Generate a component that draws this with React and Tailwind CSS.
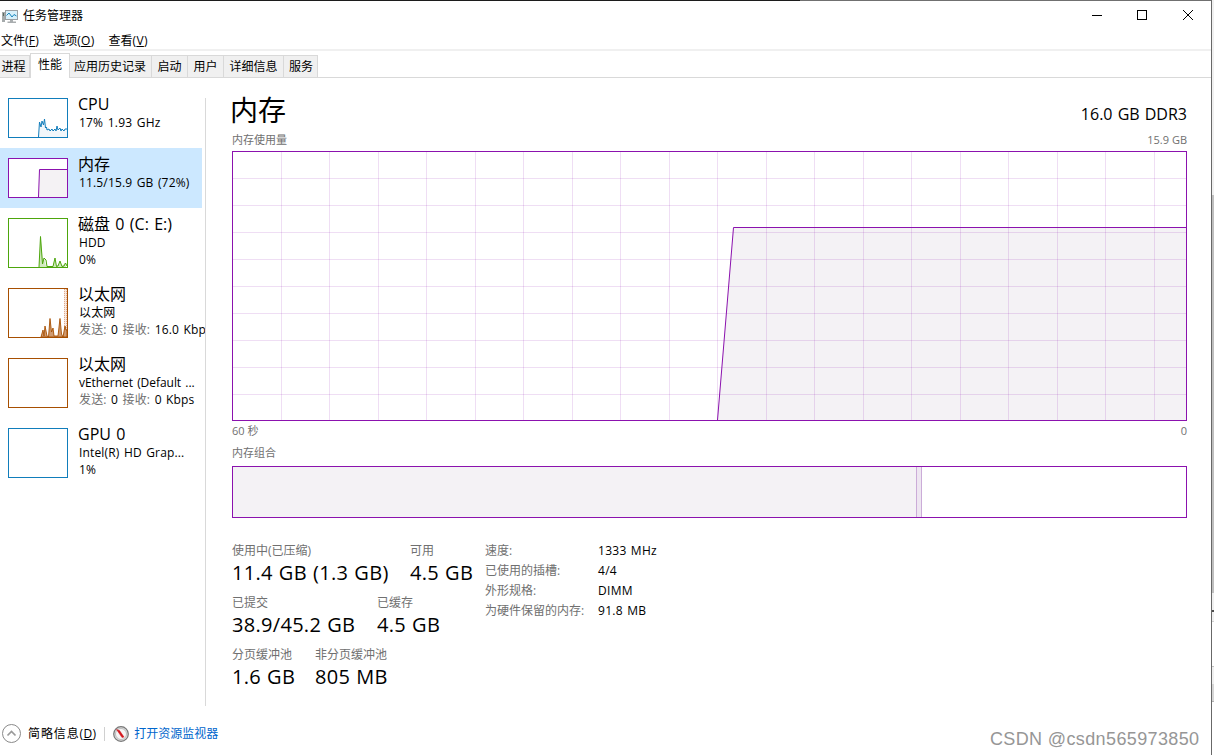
const tabs = [
    { label: '进程', box: 'w-[30px] pr-[2px]' },
    { label: '性能', box: 'w-[40px]', active: true },
    { label: '应用历史记录', box: 'w-[82px] pr-px' },
    { label: '启动', box: 'w-[36px]' },
    { label: '用户', box: 'w-[36px]' },
    { label: '详细信息', box: 'w-[60px]' },
    { label: '服务', box: 'w-[34px] pl-px' },
];

const columns = Array.from({ length: 19 }, (_, i) => Math.floor(0.5 + 48.5 * (i + 1)) + 0.5);
const rows = Array.from({ length: 9 }, (_, i) => 27 * (i + 1) + 0.5);

const Thumb = ({ height, color, children }) => (
    <svg width="60" height={height} className="block shrink-0" fill="none">
        <rect x="0.5" y="0.5" width="59" height={height - 1} fill="#fff" stroke={color} />
        {children}
    </svg>
);

const CpuThumb = () => (
    <Thumb height={40} color="#117dbb">
        <path d="M31 39L32 25L34 29L35 23L36 26L37 29L38 21L39 31L40 29L41 32L43 31L45 33L47 31L49 32L51 33L53 32L55 33L59 32V39Z" fill="#f1f6fa" />
        <path d="M30.5 39L31.5 24L33 29L34 23L35.5 27L36.5 21L37.5 30L38.5 29L39 32L41 31L42 33L44 31L45 33L47 31L48 33L49 28L50 32L52 30L53 33L54 31L56 33L57 31L60 31" stroke="#117dbb" />
    </Thumb>
);

const MemoryThumb = () => (
    <Thumb height={40} color="#8b12ae">
        <path d="M31 39V11.5H59V39Z" fill="#f4f2f4" />
        <path d="M30.5 39L31.5 11.5H59" stroke="#8b12ae" />
    </Thumb>
);

const DiskThumb = () => (
    <Thumb height={50} color="#4da60c">
        <path d="M31 49L32.5 18L35 44L36 40L38 48L42 48L45 48L47 40L48.5 48L51 46L52 43L54 48L57 45L58 49" fill="#d2e9c0" />
        <path d="M31 49L32.5 18.5L34.5 46L36 40L38 42L39 48.5H45L47 40L48.5 48.5L50 48L52 43L54 48.5L56 48L57.5 45L59 48" stroke="#4da60c" />
    </Thumb>
);

const NetworkThumb = () => (
    <Thumb height={50} color="#a74f01">
        <rect x="56" y="1" width="3" height="48" fill="#f7e9df" />
        <path d="M56.5 1V49" stroke="#e0a98c" strokeDasharray="1 1" />
        <path d="M58.5 1V49" stroke="#e0a98c" strokeDasharray="1 1" />
        <path d="M33 49L35 42L36 48L37 38L39 48L40.5 49L42 30.5L43.5 44L45 40L46 48L50 48L52 30.5L53.5 46L55 49L57 38L58 42L59 42V49Z" fill="#cf9a70" stroke="#a74f01" strokeWidth="0.9" />
    </Thumb>
);

const Traffic = ({ rate }) => (
    <>
        <span className="text-[#707070]">发送:</span> 0 <span className="text-[#707070]">接收:</span> {rate}
    </>
);

const devices = [
    { name: 'CPU', lines: [<span className="tracking-[0.2px]">17% 1.93 GHz</span>], thumb: <CpuThumb />, height: 'h-[60px]' },
    { name: '内存', lines: ['11.5/15.9 GB (72%)'], thumb: <MemoryThumb />, height: 'h-[60px]', selected: true },
    { name: '磁盘 0 (C: E:)', lines: ['HDD', '0%'], thumb: <DiskThumb />, height: 'h-[70px]' },
    { name: '以太网', lines: ['以太网', <Traffic rate="16.0 Kbps" />], thumb: <NetworkThumb />, height: 'h-[70px]' },
    {
        name: '以太网',
        lines: [<span className="tracking-[-0.05px]">vEthernet (Default ...</span>, <Traffic rate="0 Kbps" />],
        thumb: <Thumb height={50} color="#a74f01" />,
        height: 'h-[70px]',
    },
    { name: 'GPU 0', lines: ['Intel(R) HD Grap...', '1%'], thumb: <Thumb height={50} color="#117dbb" />, height: 'h-[70px]' },
];

const stats = [
    [
        { label: '使用中(已压缩)', value: '11.4 GB (1.3 GB)', box: 'w-[178px]' },
        { label: '可用', value: '4.5 GB', box: 'w-[75px]' },
    ],
    [
        { label: '已提交', value: '38.9/45.2 GB', box: 'w-[145px]' },
        { label: '已缓存', value: '4.5 GB', box: 'w-[75px]' },
    ],
    [
        { label: '分页缓冲池', value: '1.6 GB', box: 'w-[83px]' },
        { label: '非分页缓冲池', value: '805 MB', box: 'w-[90px]' },
    ],
];

const details = [
    ['速度:', '1333 MHz'],
    ['已使用的插槽:', '4/4'],
    ['外形规格:', 'DIMM'],
    ['为硬件保留的内存:', '91.8 MB'],
];

const TitleBar = () => (
    <div className="h-[30px] flex items-center justify-between">
        <div className="flex items-center">
            <svg width="18" height="16" viewBox="0 0 18 16" className="mr-[5px]">
                <rect x="2" y="4" width="3" height="10" fill="#a5aaab" />
                <rect x="3" y="5" width="1" height="3" fill="#5c6b60" />
                <rect x="5.5" y="2.5" width="12" height="9" fill="#d7f0fb" stroke="#9a9fa3" />
                <path d="M6.5 7.5L9 5L12 9L14 6.5L16.5 8" stroke="#1885bd" fill="none" />
                <path d="M10 12H13V13.5H16V15H7.5V13.5H10Z" fill="#a9adaf" />
            </svg>
            <span className="text-xs leading-4">任务管理器</span>
        </div>
        <svg width="119" height="30" className="shrink-0" fill="none" stroke="#000" shapeRendering="crispEdges">
            <path d="M0 14.5H10" />
            <rect x="45.5" y="9.5" width="9" height="9" />
            <path d="M91 9L101 19M101 9L91 19" shapeRendering="auto" />
        </svg>
    </div>
);

const MenuItem = ({ label, hotkey }) => (
    <span>
        {label}
        <span className="tracking-[0.3px]">(<u>{hotkey}</u>)</span>
    </span>
);

const Sidebar = () => (
    <div className="w-[206px] h-[629px] shrink-0 flex pt-[10px]">
        <div className="w-[205px] overflow-hidden shrink-0">
            {devices.map((d, i) => (
                <div key={i} className={`${d.height} flex pl-2 pt-[10px] ${d.selected ? 'w-[202px] bg-[#cce8ff]' : 'w-[205px]'}`}>
                    {d.thumb}
                    <div className="ml-[10px] -mt-1 whitespace-pre [word-spacing:1.2px]">
                        <div className="text-base leading-5">{d.name}</div>
                        {d.lines.map((line, j) => (
                            <div key={j} className="ml-px text-xs leading-[17px] tracking-[0.15px]">{line}</div>
                        ))}
                    </div>
                </div>
            ))}
        </div>
        <div className="w-px h-[608px] mt-[10px] bg-[#d9d9d9]" />
    </div>
);

const UsageChart = () => (
    <svg width="955" height="270" className="block" fill="none">
        <path d="M485.5 269L501.5 76.5H954V269Z" fill="#f4f2f5" />
        <g stroke="#8b12ae" strokeOpacity="0.14">
            {columns.map((x) => <path key={x} d={`M${x} 1V269`} />)}
            {rows.map((y) => <path key={y} d={`M1 ${y}H954`} />)}
        </g>
        <path d="M485.5 269L501.5 76.5H954" stroke="#8b12ae" />
        <rect x="0.5" y="0.5" width="954" height="269" stroke="#8b12ae" />
    </svg>
);

const MemoryPanel = () => (
    <div className="ml-[26px] w-[955px] flex flex-col">
        <div className="flex justify-between h-[54px]">
            <h1 className="text-[28px] leading-[38px] mt-[13px] -ml-[2px]">内存</h1>
            <span className="text-base leading-5 mt-[26px] [word-spacing:1px]">16.0 GB DDR3</span>
        </div>
        <div className="flex justify-between text-[11px] leading-4 h-[19px] text-[#707070]">
            <span>内存使用量</span>
            <span>15.9 GB</span>
        </div>
        <UsageChart />
        <div className="flex justify-between text-[11px] leading-4 mt-[2px] text-[#707070]">
            <span>60 秒</span>
            <span>0</span>
        </div>
        <div className="text-[11px] leading-4 mt-[6px] text-[#707070]">内存组合</div>
        <div className="mt-[5px] h-[52px] border border-[#8b12ae] flex">
            <div className="w-[683px] bg-[#f4f2f5]" />
            <div className="w-[6px] border-x border-[#cbacd8] bg-[#eee6f1]" />
        </div>

        <div className="mt-[25px] flex whitespace-nowrap">
            <div className="w-[253px] shrink-0">
                {stats.map((row, i) => (
                    <div key={i} className="flex h-[52px]">
                        {row.map((s) => (
                            <div key={s.label} className={`${s.box} shrink-0`}>
                                <div className="text-xs leading-4 text-[#707070]">{s.label}</div>
                                <div className="text-xl leading-7 tracking-[0.3px] [word-spacing:0.6px]">{s.value}</div>
                            </div>
                        ))}
                    </div>
                ))}
            </div>
            <div className="text-xs leading-5 -mt-[2px]">
                {details.map(([label, value]) => (
                    <div key={label} className="flex">
                        <span className="w-[113px] text-[#707070]">{label}</span>
                        <span className="tracking-[0.3px] [word-spacing:0.8px]">{value}</span>
                    </div>
                ))}
            </div>
        </div>
    </div>
);

const Footer = () => (
    <div className="flex items-center h-[30px] mt-[12px] text-xs leading-4">
        <svg width="20" height="20" viewBox="0 0 20 20" className="ml-[2px]" fill="none">
            <circle cx="9.5" cy="9.5" r="9" stroke="#8a8a8a" />
            <path d="M5.5 11.5L9.5 7.5L13.5 11.5" stroke="#9a9a9a" strokeWidth="1.7" />
        </svg>
        <span className="ml-[6px]">
            <MenuItem label={<span className="tracking-[0.9px]">简略信息</span>} hotkey="D" />
        </span>
        <div className="w-px h-[14px] bg-[#d0d0d0] ml-2" />
        <svg width="16" height="16" viewBox="0 0 16 16" className="ml-2 -mt-px">
            <circle cx="8" cy="8" r="7.3" fill="#ddd" stroke="#777" strokeWidth="1.2" />
            <circle cx="8" cy="8" r="5.5" fill="#f5f5f5" stroke="#aaa" strokeWidth="0.7" />
            <path d="M3.5 3.5L6.5 4.5L11 11L9 11.5Z" fill="#d3161d" stroke="#d3161d" strokeWidth="0.5" />
        </svg>
        <span className="ml-[5px] text-[#0066cc]">打开资源监视器</span>
    </div>
);

// Sliver of the window behind, visible past the right edge
const BackgroundEdge = () => (
    <div className="w-[2px] h-[755px] shrink-0 flex flex-col">
        <div className="h-[195px] bg-[#f0f0f0]" />
        <div className="h-[398px] bg-[#bfbfbf]" />
        <div className="h-[17px] bg-[#f0f0f0]" />
        <div className="h-[2px] bg-[#505050]" />
        <div className="h-[9px] bg-[#f0f0f0]" />
        <div className="h-px bg-[#d0d0d0]" />
        <div className="h-[44px] bg-white" />
        <div className="h-px bg-[#c0c0c0]" />
        <div className="h-[17px] bg-[#f0f0f0]" />
        <div className="h-[17px] bg-[#d6d6d6]" />
        <div className="h-px bg-[#b0b0b0]" />
        <div className="flex-1 bg-white" />
    </div>
);

const App = () => {
    return (
        <div className="relative w-[1214px] h-[755px] overflow-hidden flex bg-white text-black font-['Open_Sans','Noto_Sans_CJK_SC',sans-serif]">
            <div className="w-[1212px] shrink-0 border-r border-[#686868] flex flex-col">
                <div className="h-px shrink-0 flex">
                    <div className="w-[800px] bg-[#1c1c1c]" />
                    <div className="flex-1 bg-[#707070]" />
                </div>
                <TitleBar />
                <div className="h-[20px] flex items-center gap-[14px] pl-px pt-[2px] text-xs border-b-2 border-[#f0f0f0]">
                    <MenuItem label="文件" hotkey="F" />
                    <MenuItem label="选项" hotkey="O" />
                    <MenuItem label="查看" hotkey="V" />
                </div>
                <div className="h-[27px] flex items-end text-xs border-b border-[#d9d9d9]">
                    {tabs.map((t) => (
                        <div
                            key={t.label}
                            className={`${t.box} flex items-center justify-center whitespace-nowrap border-t border-r border-[#d9d9d9] ${
                                t.active ? 'h-[25px] -mb-px border-l bg-white pb-[2px]' : 'h-[22px] bg-[#f0f0f0]'
                            }`}
                        >
                            {t.label}
                        </div>
                    ))}
                </div>
                <div className="flex">
                    <Sidebar />
                    <MemoryPanel />
                </div>
                <Footer />
            </div>
            <BackgroundEdge />
            <div className="absolute left-[990px] top-[727px] text-lg leading-6 tracking-[0.37px] text-[#969696] font-['Liberation_Sans',sans-serif] whitespace-nowrap">
                CSDN @csdn565973850
            </div>
        </div>
    );
};

export default App;
